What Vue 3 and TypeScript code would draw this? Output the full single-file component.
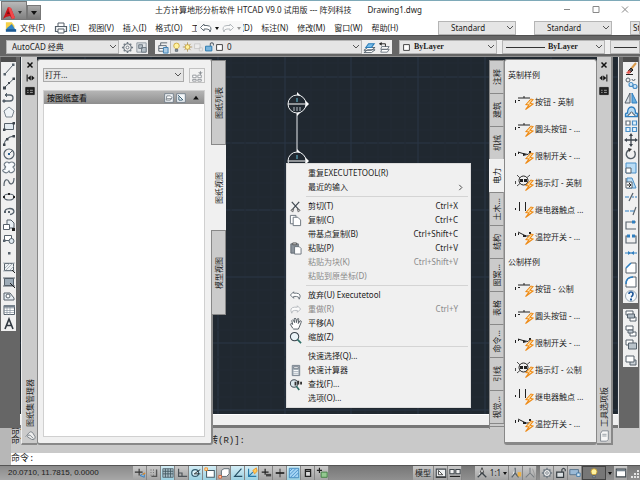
<script setup lang="ts">
import { h, ref, type FunctionalComponent } from 'vue'

type Shape = [d: string, stroke: string, fill: string, width?: number]

const S = '#56616b'
const L = '#4a90c8'
const K = '#222222'
const O = '#f08c1e'
const N = 'none'

const bolt: Shape = ['M17 6l-5 5.500 3 .5-3.500 4.500 7.500-5.500-3-.8 3-3.700z', '#ee8a16', '#ffe9b8', 1.1]

const icons: Record<string, Shape[]> = {
  line: [['M3 12L11 3', S, N], ['M1.5 11h2.5v2.5H1.5zM10 1.500h2.500v2.500H10z', N, S]],
  xline: [['M2.500 11.500L12 2.500', S, N], ['M1 10.500h3v3H1zM6 6h2v2H6zM10.500 1.500h2.500v2.500h-2.500z', N, '#3c444c']],
  pline: [['M2 11h6a3 3 0 0 0 0-6H4', S, N, 1.3], ['M5 3L3 5l2 2M1 10h2v2H1z', S, S]],
  polygon: [['M7 2l5 4-2 6H4L2 6z', '#7a858f', '#eef3f7']],
  rect: [['M2.500 4.500h9v6h-9z', S, '#e3ebf1'], ['M1 9.500h2.500V12H1zM10.500 3H13v2.500h-2.500z', N, '#3c444c']],
  arc: [['M2 12Q3 4 12 3', S, N, 1.2], ['M1 10.500h2.500V13H1zM4 5h2.500v2.500H4zM10.500 2H13v2.500h-2.500z', N, '#3c444c']],
  circle: [['M2 7a5 5 0 1 0 10 0a5 5 0 1 0-10 0', S, N, 1.2], ['M7 7l3-3', S, N], ['M6 6h2v2H6z', N, '#2c5f8c']],
  cloud: [['M4 6q-3-2-1-4t4 0q3-2 5 0t-1 4q3 3 0 5t-4-1q-2 3-5 1t1-3q-1-1 1-2', '#6f7b86', '#f8fbfd', 1.1]],
  spline: [['M2 11C2 3 6 4 7 7S12 10 12 3', S, N, 1.2]],
  ellipse: [['M2 7a5 3 0 1 0 10 0a5 3 0 1 0-10 0', S, N, 1.2], ['M6 3h2v2H6zM1 6h2v2H1zM11 6h2v2h-2z', N, K]],
  earc: [['M3 8a4.500 3 0 1 1 5 2.500', S, N, 1.3], ['M6 7h2v2H6zM2 7h2v2H2z', N, S]],
  insert: [['M5 2h4l3 3v5H5z', S, '#e9f0f5'], ['M1.500 6.500h6v5h-6z', S, '#fff'], ['M10 10h3v3h-3z', N, K]],
  block: [['M2.500 3.500h7v5h-7z', S, '#fff'], ['M7 9a2.500 2.500 0 1 0 5 0a2.500 2.500 0 1 0-5 0', S, '#dfe8ef'], ['M1 7.500h2.500V10H1z', N, S]],
  point: [['M6 6h2.500v2.500H6z', N, S]],
  hatch: [['M2.500 3.500h9v7h-9z', S, '#edf1f4'], ['M3 8l5-5M4 10l7-7M8 10l4-4M1 3h12M1 11h12', '#929da6', N, 0.7], ['M10 10l3 3', K, N]],
  gradient: [['M2.500 3.500h9v7h-9z', S, '#9dabb7'], ['M1 3h12M1 11h12', S, N], ['M8 8l5 5', K, N]],
  region: [['M2 4h6l4 5v2H2z', S, '#e7eef4'], ['M4 7a2 2 0 1 0 4 0a2 2 0 1 0-4 0', S, '#fff']],
  table: [['M2 2.500h10.500v9H2z', S, '#fff'], ['M2 5h10M2 7.500h10M2 9.500h10M5 3v9M8 3v9', '#8995a0', N, 0.7], ['M2 2h11v2.500H2z', N, '#75818c']],
  text: [['M3 12L7 2l4 10M4.500 8.500h5', '#303840', N, 1.6]],
  erase: [['M12 1L7 7', '#d99a4b', N, 2], ['M7 6l2 2-3 3-2-2z', K, '#555'], ['M5 8l2 2-2 2-3-1z', N, '#e4574e'], ['M2 12.500h7', K, N]],
  copy: [['M2 4a2 2 0 1 0 4 0a2 2 0 1 0-4 0M8 3a1.500 1.500 0 1 0 3 0', S, N], ['M5 8.500a2 2 0 1 0 4 0a2 2 0 1 0-4 0M9 10.500a2 2 0 1 0 4 0a2 2 0 1 0-4 0', L, '#cfe6f8', 1.2]],
  mirror: [['M6 2v10H1z', S, '#d9e0e6'], ['M8 2v10h5z', '#2f7fc0', '#69aede']],
  offset: [['M1.500 11.500V9q0-1 2-1 0-6 4-6t4 6q2 0 2 1v2.500z', '#2f7fc0', '#b7daf3', 1.3], ['M4 11q0-2 2-2 0-2 1.500-2T9 9q2 0 2 2', S, '#f0f0f0']],
  array: [['M2 2h4v4H2z', '#64707b', '#fff', 1.2], ['M8.500 2h4v4h-4zM2 8.500h4v4H2zM8.500 8.500h4v4h-4z', L, '#e7f3fc', 1.2]],
  move: [['M7 2v10M2 7h10', '#3c444c', N, 1.3], ['M7 0l2 3H5zM7 14l2-3H5zM0 7l3-2v4zM14 7l-3-2v4z', N, '#3c444c']],
  rotate: [['M5 3a4.500 4.500 0 1 0 5 1', '#555e66', N, 1.4], ['M4 1l4 1-3 3z', N, '#333']],
  scale: [['M2 2h10v10H2z', L, '#b9dcf5'], ['M2 7h5v5H2z', S, '#fff']],
  stretch: [['M3 2h5l4 10H3z', L, '#b9dcf5'], ['M2 2v10h6V6H2', S, '#fff'], ['M3 9h4M5 7l2 2-2 2', K, N]],
  trim: [['M5 11l4-8', S, N, 1.2], ['M1 7h4M8 7h2M11 7h2', '#2f7fc0', N, 1.2]],
  extend: [['M9 11l3-8', S, N, 1.2], ['M1 7h4M6 7h4', '#2f7fc0', N, 1.2]],
  breakpt: [['M12 4H2v7h10', S, N, 1.1], ['M8 2.500h3v3H8z', N, '#2f7fc0']],
  breakln: [['M4 4H2v7h10V4h-2', S, N, 1.1], ['M3 2.500h3v3H3zM8 2.500h3v3H8z', N, '#2f7fc0']],
  join: [['M1 7h12', '#2f7fc0', N], ['M4 5l3 2-3 2zM10 5L7 7l3 2z', N, '#2f7fc0']],
  chamfer: [['M2 12V7l5-5h5v10z', S, '#fff'], ['M2 7l5-5', '#2f7fc0', N, 1.6]],
  fillet: [['M2 12V9q0-7 7-7h3v10z', S, '#fff'], ['M2 9q0-7 7-7', '#2f7fc0', N, 1.6]],
  help: [['M1.500 7a5.500 5.500 0 1 0 11 0a5.500 5.500 0 1 0-11 0', '#9aa9b5', '#f4f8fb'], ['M5 5q0-2 2-2t2 2-2 3', '#1e5799', N, 1.7], ['M6 9.500h2v2H6z', N, '#1e5799']],
  order1: [['M2 2h7v4H2zM6 8h6v4H6z', S, '#fff'], ['M3.500 5h7v4h-7z', S, '#aeb9c2']],
  order2: [['M6 8h6v4H6zM2 2h7v4H2z', S, '#fff'], ['M4 6h5v3H4z', S, '#c3ccd4']],
  order3: [['M2 2h7v5H2z', S, '#fff'], ['M4.500 5h8v6h-8z', S, '#bac3ca']],
  order4: [['M6 7h6v5H6z', S, '#c9d0d6'], ['M2 3h8v6H2z', S, '#fff']],
  gear: [['M7 1v12M1 7h12M3 3l8 8M11 3l-8 8', '#6f7982', N, 1.6], ['M3 7a4 4 0 1 0 8 0a4 4 0 1 0-8 0', '#6f7982', '#eee', 1.2], ['M5.500 7a1.500 1.500 0 1 0 3 0a1.500 1.500 0 1 0-3 0', '#6f7982', '#fff']],
  wsave: [['M2 2h10v10H2z', '#8b959d', '#dfe3e6'], ['M4 4h4v4H4zM7 7h5v5H7z', '#6c7780', '#b5bfc7']],
  layers: [['M5 2h7M5 2v3M3 5h8v6H3zM3 8h8', S, '#f6f8fa'], ['M8 7h5v6H8z', '#397db2', '#a9cbe5']],
  bulb: [['M3.500 5.500a3.500 3.500 0 1 1 7 0q0 2-2 3.500h-3q-2-1.500-2-3.500z', '#c69b2d', '#fff3a0'], ['M5.500 10h3v2.500h-3z', S, '#8c98a3']],
  sun: [['M7 1v12M1 7h12M3 3l8 8M11 3l-8 8', '#a88e55', N], ['M4 7a3 3 0 1 0 6 0a3 3 0 1 0-6 0', '#c69b2d', '#fff3a0']],
  vpfreeze: [['M2 3h7v6H2zM8 8h4v4H8z', '#c3c3c3', '#ececec']],
  lock: [['M8 6V3q2-3 4 0v2', '#56616b', N, 1.3], ['M2 6h8v6H2z', '#2677ad', '#7ab5dd', 1.2]],
  box: [['M2.500 2.500h9v9h-9z', '#333', '#fff', 1.4]],
  stack: [['M1 10l4-3h8l-4 3zM1 12.500l4-3h8l-4 3z', '#53606b', '#fff'], ['M3 7l3-4h6l-3 4z', '#2b7db8', '#78bce9', 1.2]],
  stackback: [['M4 6h8l-2 3H3zM4 9h8l-2 3H3z', '#68737c', '#fff'], ['M2 3h6v3', K, N], ['M4 1v4L1 3z', N, K]],
  print: [['M4 5V2h6v3', S, '#fff'], ['M1.500 5.500h11v5h-11z', S, '#f5f7f8', 1.2], ['M4 8h6v4H4z', S, '#fff']],
  undo: [['M5 3L1.500 6.500 5 10V8h3q3 0 3 3 3-6-3-6.500H5z', '#626c75', '#fff']],
  redo: [['M9 3l3.500 3.500L9 10V8H6q-3 0-3 3-3-6 3-6.500h3z', '#b4b9bd', '#fafafa']],
  cut: [['M3 2l8 9M11 2L3 11', '#414a52', N, 1.3], ['M2 11l3-1-1 3zM12 11l-3-1 1 3z', '#666', '#ddd']],
  copydoc: [['M1.500 1.500h6v9h-6z', '#68717a', '#fff'], ['M4.500 3.500h5l3 3v6h-8z', '#68717a', '#fff']],
  paste: [['M2 2h8v10H2z', '#606870', '#8b939b'], ['M4 1h4v2H4z', '#555', '#ddd'], ['M6 5h5l2 2v6H6z', '#68717a', '#fff']],
  pan: [['M4 12L1.500 8q0-2 2.500 0L3 4q1-2 2 0l1 2-.5-4q1-1.500 2 0L8 6l1-4q2-1 1.500 1L10 7l2-3q2 0 1 2l-2 5-1 2H5z', '#4f575e', '#fff']],
  zoom: [['M1.500 6a4.500 4.500 0 1 0 9 0a4.500 4.500 0 1 0-9 0', '#39424b', '#eaf3f7', 1.1], ['M9 9l4 4', '#2d6f68', N, 1.8]],
  calc: [['M3.500 1.500h8v11h-8z', '#78828c', '#aab4bd'], ['M5 3h5v2H5z', '#77818a', '#fff'], ['M5 7h5M5 9h5M5 11h5', '#fff', N]],
  find: [['M1.500 6a4 4 0 1 0 8 0a4 4 0 1 0-8 0', '#414b54', '#dbe9ef', 1.1], ['M8 9l3 4', '#2d6f68', N, 1.8], ['M6 4h2v4H6zM9 3h2v4H9zM12 4h2v3h-2z', N, '#333']],
  close: [['M3.500 3.500l7 7M10.500 3.500l-7 7', '#111', N, 2]],
  dockL: [['M3 2v10', '#111', N, 1.5], ['M4 7l4-3v6zM13 7L9.500 4v6z', '#111', '#111', 0.5]],
  dockR: [['M11 2v10', '#111', N, 1.5], ['M10 7L6 4v6zM1 7l3.500-3v6z', '#111', '#111', 0.5]],
  props: [['M1 2h12v10H1z', '#111', '#222', 1], ['M3 6h2M3 9h2M7 6h4M7 9h4', '#ccc', N]],
  newsheet: [['M2 6h4v3H2zM8 6h4v3H8zM2 11h4v2H2zM8 11h4v2H8z', '#8a8f94', '#fff'], ['M11 1l1 2 2 0-2 1-1 2-1-2-2-1 2 0z', N, '#8a8f94']],
  sheetA: [['M1 1h12v12H1z', '#5d6d7b', '#f4f7f9'], ['M4 4h5l2 2-2 4H3z', S, '#fff'], ['M4 8h7', S, N]],
  sheetB: [['M1 1h12v12H1z', '#5d6d7b', '#f4f7f9'], ['M3 3l7 7M4 5v5h5', '#31586f', N, 1.3]],
  collapse: [['M3 9h8L7 4z', N, '#111']],
  clip: [['M2 8l4-5q2-2 4 0l3 5q0 4-4 3L4 8q0-3 3-2l4 4', '#707880', '#eee']],
  paper: [['M5 1h7v10l-2 2H3V4z', '#78818a', '#f7f7f7'], ['M5 5h5M5 7h5', '#8b949b', N]],
  snapi: [['M1 6h9M6 2v8', '#333', N, 1.3], ['M7 10l5-3v5z', '#3779b8', '#87b9e1'], ['M10 9l3-2', O, N, 1.4]],
  snap: [['M10 3v8H4', '#555', N, 1.6], ['M3 3h1v1H3zM6 3h1v1H6zM3 6h1v1H3zM6 6h1v1H6zM3 9h1v1H3zM6 9h1v1H6z', N, '#555']],
  grid: [['M1 2h12v10H1z', '#52636c', '#aac0ca'], ['M4 2v10M7 2v10M10 2v10M1 5h12M1 8h12', '#405660', N]],
  ortho: [['M3 2v9h10M3 7h4v4', '#4d5358', N, 1.4]],
  polar: [['M2 7a4 4 0 1 0 8 0a4 4 0 1 0-8 0', '#345d70', '#d9f1f9', 1.4], ['M5 8l7-5M5 8h7', '#222', N]],
  osnap: [['M3 4h9v8H3z', '#465c67', '#fff', 1.2], ['M1 1h3v3H1z', O, '#ffe1c2']],
  osnap3: [['M4 4l3-2h6v6l-3 3H4z', '#52616a', '#fff'], ['M1 10h3v3H1z', '#d5582e', '#ffe1c2']],
  track: [['M11 2L3 11h9', '#244e63', N, 1.3]],
  ducs: [['M3 2v9h9M3 11l5-5', '#277aa8', N, 1.3], ['M8 4l4-3 1 4-3 3z', O, '#ffcf56']],
  dyn: [['M2 6h8M6 2v7', '#222', N, 1.4], ['M7 8h6v3H7z', N, '#444']],
  lwt: [['M2 7h10', '#222', N, 2], ['M7 2v10', '#222', N]],
  transp: [['M1.500 1.500h11v11h-11z', '#3b82b7', '#a5d5f5'], ['M2 5l3-3M2 9l7-7M3 12l9-9M7 12l5-5', '#438bc6', N]],
  qp: [['M4 3h6v8H4zM4 5h6', '#222', '#ddd', 1.5]],
  sc: [['M1 4h6M4 1v6', '#222', N, 1.3], ['M6 6h7v6H6z', '#3c7b3d', '#93c990']],
  layout: [['M1.500 2.500h11v9h-11z', '#454b50', '#eef0f1', 1.3], ['M4 4l5 5H4z', '#333', '#fff'], ['M1 12h12', '#222', N]],
  qview: [['M1 3h5v5H1zM8 3h5v5H8z', '#3f464b', '#f1f1f1', 1.2], ['M1 11h12', '#222', N, 1.3]],
  annot: [['M7 1v6L2 12M7 7l5 5M5 7h4', '#3b4248', '#fff', 1.5], ['M7 1l2 5H5z', '#444', '#fff']],
  annot2: [['M6 1v6L2 12M6 7l4 5', '#59636b', '#fff', 1.5], ['M9 6h4v5H9z', N, '#edb145']],
  annot3: [['M7 1v6L2 12M7 7l5 5', '#777d82', N, 1.2], ['M10 2l3 9', '#999', N]],
  unlock: [['M8 6V3q2-3 4 0v2', '#454c52', N, 1.4], ['M2 6h8v6H2z', '#353c41', '#dbe0e3', 1.4]],
  hw: [['M1 3h10v6H1z', '#506c87', '#9bbad6'], ['M9 7h4v4H9z', '#3b76a8', '#d7ebf8']],
  clean: [['M1.500 2.500h11v9h-11z', '#3d454b', '#fff', 1.3], ['M2 3h10v2H2z', N, '#76848f']],
}

const symbols: Record<string, Shape[]> = {
  button: [['M1.500 7v3M4 5h12M10 3v2', K, N, 1], ['M4 7h2v1H4zM15 7h2v1h-2z', N, K], bolt],
  limit: [['M1.500 6v3M4 5l5 1.500 5 1 2-2', K, N, 1], ['M4 5h1v2H4zM9 6l4 2-4 1zM15 4h2v2h-2z', N, K], bolt],
  lamp: [['M3 1l12 12M16 1L3 12M1.500 7v3', K, N, 0.8], ['M5 6.500a4 4 0 1 0 9 0a4 4 0 1 0-9 0', K, '#f0f0f0', 1], ['M6 5h3v3H6zM10 5h3v3h-3z', N, K], bolt],
  relay: [['M5.500 1v9M11.500 1v9', K, N, 1], ['M1 7h1v2H1z', N, K], bolt],
  temp: [['M1.500 5v3M4 4l8 4h5', K, N, 1], ['M4 5h1v2H4zM9 7h3v2H9zM15 4h2v2h-2z', N, K], bolt],
}

const draw = (shapes: Shape[]) =>
  shapes.map(([d, stroke, fill, w]) => h('path', { d, stroke, fill, 'stroke-width': w ?? 1 }))

const Ico: FunctionalComponent<{ name: string }> = (p) =>
  h('svg', { viewBox: '0 0 14 14', 'aria-hidden': 'true' }, draw(icons[p.name] ?? []))
Ico.props = ['name']

const Sym: FunctionalComponent<{ name: string }> = (p) =>
  h('svg', { viewBox: '0 0 20 17', 'aria-hidden': 'true' }, draw(symbols[p.name] ?? []))
Sym.props = ['name']

const menus = ['文件(F)', '编辑(E)', '视图(V)', '插入(I)', '格式(O)', '工具(T)', '绘图(D)', '标注(N)', '修改(M)', '窗口(W)', '帮助(H)']
const drawTools = ['line', 'xline', 'pline', 'polygon', 'rect', 'arc', 'circle', 'cloud', 'spline', 'ellipse', 'earc', 'insert', 'block', 'point', 'hatch', 'gradient', 'region', 'table', 'text']
const editTools = ['erase', 'copy', 'mirror', 'offset', 'array', 'move', 'rotate', 'scale', 'stretch', 'trim', 'extend', 'breakpt', 'breakln', 'join', 'chamfer', 'fillet', 'help']
const orderTools = ['order1', 'order2', 'order3', 'order4']

const sheetTabs = ['图纸列表', '图纸视图', '模型视图']
const sheetTab = ref('图纸视图')
const toolTabs = ['注释', '建筑', '机械', '电力', '土木...', '结构', '图案...', '表格', '命令...', '引线', '视觉...']
const toolTab = ref('电力')

const groups = ['英制', '公制'].map((unit) => ({
  title: unit + '样例',
  items: [
    ['button', '按钮 - ' + unit],
    ['button', '圆头按钮 - ...'],
    ['limit', '限制开关 - ...'],
    ['lamp', '指示灯 - ' + unit],
    ['relay', '继电器触点 ...'],
    ['temp', '温控开关 - ...'],
  ],
}))

interface Cmd { label: string; key?: string; icon?: string; off?: boolean; sub?: boolean }
const commands: Cmd[][] = [
  [{ label: '重复EXECUTETOOL(R)' }, { label: '最近的输入', sub: true }],
  [
    { label: '剪切(T)', key: 'Ctrl+X', icon: 'cut' },
    { label: '复制(C)', key: 'Ctrl+C', icon: 'copydoc' },
    { label: '带基点复制(B)', key: 'Ctrl+Shift+C' },
    { label: '粘贴(P)', key: 'Ctrl+V', icon: 'paste' },
    { label: '粘贴为块(K)', key: 'Ctrl+Shift+V', off: true },
    { label: '粘贴到原坐标(D)', off: true },
  ],
  [
    { label: '放弃(U) Executetool', icon: 'undo' },
    { label: '重做(R)', key: 'Ctrl+Y', icon: 'redo', off: true },
    { label: '平移(A)', icon: 'pan' },
    { label: '缩放(Z)', icon: 'zoom' },
  ],
  [
    { label: '快速选择(Q)...' },
    { label: '快速计算器', icon: 'calc' },
    { label: '查找(F)...', icon: 'find' },
    { label: '选项(O)...' },
  ],
]

const toggles = ref([
  ['snapi', false], ['snap', false], ['grid', true], ['ortho', false], ['polar', true], ['osnap', true], ['osnap3', false],
  ['track', true], ['ducs', true], ['dyn', false], ['lwt', false], ['transp', true], ['qp', false], ['sc', false],
] as [string, boolean][])

const gridLines = Array.from({ length: 150 }, (_, i) => ({ at: Math.round((i * 40) / 3), major: i % 5 === 0 }))
</script>

<template>
  <div class="app">
    <header class="top">
      <button class="logo" aria-label="应用程序菜单">
        <svg class="logo-mark" viewBox="0 0 14 14"><path d="M1 13L6 1l3 1 4 10-3 1-2-3-4 1z" fill="#c9151b" /><path d="M6 1l3 1 4 10-3 1z" fill="#f1484b" /><path d="M6 5l2 3H5z" fill="#7c0e11" /></svg>
        <span class="tri"></span>
      </button>
      <button class="quick" aria-label="快速访问"><span class="tri"></span></button>
      <div class="titles"><span>土方计算地形分析软件 HTCAD V9.0 试用版 --- 阵列科技</span><span>Drawing1.dwg</span></div>
      <div class="window-buttons">
        <button aria-label="最小化"><svg viewBox="0 0 8 8"><path d="M1 4h6" /></svg></button>
        <button aria-label="最大化"><svg viewBox="0 0 8 8"><path d="M1 1h6v6H1z" /></svg></button>
        <button aria-label="关闭"><svg viewBox="0 0 8 8"><path d="M1 1l6 6M7 1L1 7" /></svg></button>
      </div>
    </header>

    <nav class="menubar">
      <svg class="doc" viewBox="0 0 14 14"><path d="M1 1h7l3 4v5H1z" fill="#f5d14a" /><path d="M2 8l6-5 5 8H2z" fill="#3384c4" /><path d="M1 9h12v3H1z" fill="#1d5b95" /></svg>
      <button v-for="m in menus" :key="m" class="menu">{{ m }}</button>
      <button class="float-print" aria-label="打印"><Ico name="print" /></button>
      <div class="float-undo">
        <button aria-label="放弃"><Ico name="undo" /></button><span class="tri small"></span>
        <button aria-label="重做"><Ico name="redo" /></button><span class="tri small pale"></span>
      </div>
      <div class="styles">
        <label v-for="n in 2" :key="n" class="combo wide">
          <select aria-label="样式"><option>Standard</option></select>
          <svg class="chev" viewBox="0 0 8 8"><path d="M1 2l3 3 3-3" /></svg>
        </label>
        <label class="combo cut-off"><select aria-label="多重引线样式"><option>Standard</option></select></label>
      </div>
    </nav>

    <div class="toolbar">
      <section class="group workspace-group">
        <label class="combo grow">
          <select aria-label="工作空间"><option>AutoCAD 经典</option></select>
          <svg class="chev" viewBox="0 0 8 8"><path d="M1 2l3 3 3-3" /></svg>
        </label>
        <button aria-label="工作空间设置"><Ico name="gear" /></button>
        <button aria-label="我的工作空间"><Ico name="wsave" /></button>
      </section>
      <section class="group layer-group">
        <button aria-label="图层特性"><Ico name="layers" /></button>
        <label class="combo grow layer">
          <Ico name="bulb" /><Ico name="sun" /><Ico name="vpfreeze" /><Ico name="lock" /><Ico name="box" class="swatch" />
          <select aria-label="图层"><option>0</option></select>
          <svg class="chev" viewBox="0 0 8 8"><path d="M1 2l3 3 3-3" /></svg>
        </label>
        <button aria-label="置为当前"><Ico name="stack" /></button>
        <button aria-label="上一个图层"><Ico name="stackback" /></button>
      </section>
      <section class="group prop-group">
        <label class="combo serif color">
          <Ico name="box" class="swatch" />
          <select aria-label="颜色"><option>ByLayer</option></select>
          <svg class="chev" viewBox="0 0 8 8"><path d="M1 2l3 3 3-3" /></svg>
        </label>
        <label class="combo serif ltype">
          <span class="rule"></span>
          <select aria-label="线型"><option>ByLayer</option></select>
          <svg class="chev" viewBox="0 0 8 8"><path d="M1 2l3 3 3-3" /></svg>
        </label>
        <label class="combo serif grow">
          <span class="rule short"></span>
          <select aria-label="线宽"><option>ByLayer</option></select>
        </label>
      </section>
    </div>

    <main class="workspace">
      <aside class="side left">
        <div class="tools drawing"><i class="grip"></i><button v-for="t in drawTools" :key="t" :aria-label="t"><Ico :name="t" /></button></div>
      </aside>

      <div class="view">
        <svg class="canvas">
          <g v-for="g in gridLines" :key="g.at" :stroke="g.major ? '#2b3646' : '#222b34'">
            <line :x1="g.at - 2" :x2="g.at - 2" y1="0" y2="2000" /><line :y1="g.at - 47" :y2="g.at - 47" x1="0" x2="2000" />
          </g>
          <path d="M277 55v42" stroke="#e8ebee" />
          <g v-for="y in [47, 104]" :key="y" :transform="`translate(277 ${y})`">
            <path d="M0-12L12 0 0 12z" fill="#fff" />
            <circle r="9" fill="#202830" stroke="#eceff1" />
            <path d="M-9 0H9" stroke="#fff" />
            <path d="M0-6v4" stroke="#68c0d8" />
            <path d="M-3 3v4M0 3v4M3 3v4" stroke="#b7c0c8" />
          </g>
        </svg>
        <div class="hscroll"></div>
      </div>

      <aside class="side right">
        <div class="tools editing"><i class="grip"></i><button v-for="t in editTools" :key="t" :aria-label="t"><Ico :name="t" /></button></div>
        <div class="tools ordering"><button v-for="t in orderTools" :key="t" :aria-label="t"><Ico :name="t" /></button></div>
      </aside>

      <section class="palette sheets">
        <div class="spine">
          <button aria-label="关闭"><Ico name="close" /></button>
          <button aria-label="自动隐藏"><Ico name="dockL" /></button>
          <button aria-label="特性"><Ico name="props" /></button>
          <span class="sideways spine-title">图纸集管理器</span>
          <Ico name="clip" />
        </div>
        <div class="sheet-body">
          <div class="open-row">
            <label class="combo grow">
              <select aria-label="图纸集"><option>打开...</option></select>
              <svg class="chev" viewBox="0 0 8 8"><path d="M1 2l3 3 3-3" /></svg>
            </label>
            <button class="new" aria-label="新建视图类别"><Ico name="newsheet" /></button>
          </div>
          <div class="list">
            <div class="list-head">
              <b>按图纸查看</b>
              <button aria-label="按类别查看"><Ico name="sheetA" /></button>
              <button aria-label="按图纸查看"><Ico name="sheetB" /></button>
              <button aria-label="折叠" class="fold"><Ico name="collapse" /></button>
            </div>
          </div>
        </div>
        <div class="sheet-tabs">
          <button v-for="t in sheetTabs" :key="t" :class="{ on: t === sheetTab }" @click="sheetTab = t"><span class="sideways">{{ t }}</span></button>
        </div>
      </section>

      <section class="palette tool-palette">
        <div class="tool-tabs">
          <button v-for="t in toolTabs" :key="t" :class="{ on: t === toolTab }" @click="toolTab = t"><span class="sideways">{{ t }}</span></button>
          <i></i><i></i>
        </div>
        <div class="samples">
          <template v-for="g in groups" :key="g.title">
            <h2>{{ g.title }}</h2>
            <button v-for="[sym, label] in g.items" :key="label"><Sym :name="sym" />{{ label }}</button>
          </template>
        </div>
        <div class="spine">
          <button aria-label="关闭"><Ico name="close" /></button>
          <button aria-label="自动隐藏"><Ico name="dockR" /></button>
          <button aria-label="特性"><Ico name="props" /></button>
          <span class="sideways spine-title">工具选项板</span>
          <Ico name="paper" />
        </div>
      </section>

      <div class="context" role="menu">
        <ul v-for="(set, i) in commands" :key="i">
          <li v-for="c in set" :key="c.label">
            <button role="menuitem" :disabled="c.off">
              <Ico v-if="c.icon" :name="c.icon" /><i v-else></i>
              <span>{{ c.label }}</span>
              <kbd v-if="c.key">{{ c.key }}</kbd>
              <svg v-if="c.sub" class="arrow" viewBox="0 0 6 8"><path d="M1 1l3 3-3 3" fill="none" stroke="#333" /></svg>
            </button>
          </li>
        </ul>
      </div>
    </main>

    <section class="command">
      <div class="history">
        <p>命令:</p>
        <p>命令:指定插入点或 [基点(B)/比例(S)/X/Y/旋转(R)]:</p>
      </div>
      <label class="prompt">命令:<input type="text" aria-label="命令" /></label>
    </section>

    <footer class="status">
      <output>20.0710, 11.7815, 0.0000</output>
      <button v-for="t in toggles" :key="t[0]" :class="{ on: t[1] }" :aria-label="t[0]" @click="t[1] = !t[1]"><Ico :name="t[0]" /></button>
      <span class="fill"></span>
      <button class="model">模型</button>
      <button aria-label="布局"><Ico name="layout" /></button>
      <button aria-label="快速查看"><Ico name="qview" /></button>
      <span class="gap"></span>
      <button class="ratio"><Ico name="annot" />1:1<span class="tri small"></span></button>
      <button aria-label="注释可见性"><Ico name="annot2" /></button>
      <button aria-label="自动添加比例"><Ico name="annot3" /></button>
      <span class="sep"></span>
      <button aria-label="切换工作空间"><Ico name="gear" /></button>
      <button aria-label="锁定"><Ico name="unlock" /></button>
      <button aria-label="硬件加速"><Ico name="hw" /></button>
      <button class="isolate" aria-label="隔离对象"><Ico name="bulb" /></button>
      <span class="tri small"></span>
      <button aria-label="全屏显示"><Ico name="clean" /></button>
      <svg class="resize" viewBox="0 0 9 10"><path d="M6 2h2v2H6zM3 5h2v2H3zM6 5h2v2H6zM0 8h2v2H0zM3 8h2v2H3zM6 8h2v2H6z" fill="#e3e3e3" /></svg>
    </footer>
  </div>
</template>

<style>
body {
  overflow: hidden;
}
</style>

<style scoped>
.app {
  height: 100vh;
  display: flex;
  flex-direction: column;
  overflow: hidden;
  background: #666;
  color: #1c1c1c;
  font: 8px/12px 'Noto Sans', 'Noto Sans CJK SC', sans-serif;
}
.app * {
  box-sizing: border-box;
}
button,
select,
input {
  margin: 0;
  padding: 0;
  border: 0;
  border-radius: 0;
  background: none;
  color: inherit;
  font: inherit;
}
button {
  display: flex;
  align-items: center;
  justify-content: center;
  white-space: nowrap;
}
svg {
  display: block;
  flex: none;
  width: 12px;
  height: 12px;
}
.tri {
  border: 3px solid transparent;
  border-top: 4px solid #111;
  border-bottom: 0;
}
.tri.small {
  border-width: 3px 2px 0;
}
.tri.pale {
  border-top-color: #999;
}

.top {
  flex: none;
  height: 20px;
  display: flex;
  align-items: flex-start;
  background: #fff;
  border-top: 1px solid #7ea9b8;
}
.logo {
  width: 26px;
  height: 19px;
  margin-left: 1px;
  padding-top: 4px;
  gap: 2px;
  justify-content: flex-start;
  background: linear-gradient(#b9b9b9, #808080);
  border: 1px solid #777;
}
.logo .tri {
  border-width: 3px 2px 0;
  border-top-color: #333;
}
.logo-mark {
  width: 14px;
  height: 14px;
}
.quick {
  width: 14px;
  height: 15px;
  margin-top: 4px;
  background: linear-gradient(#a9a9a9, #777);
  border: 1px solid #777;
}
.titles {
  flex: 1;
  display: flex;
  gap: 16px;
  padding: 3px 0 0 114px;
  white-space: nowrap;
}
.window-buttons {
  display: flex;
  gap: 21px;
  padding: 4px 11px 0 0;
}
.window-buttons svg {
  width: 8px;
  height: 9px;
  fill: none;
  stroke: #888;
}

.menubar {
  position: relative;
  flex: none;
  height: 15px;
  display: flex;
  align-items: center;
  gap: 9px;
  padding-left: 5px;
  background: #fff;
}
.doc {
  width: 12px;
  height: 13px;
  margin-right: -6px;
}
.float-print {
  position: absolute;
  left: 53px;
  top: 1px;
  width: 16px;
  height: 14px;
  background: #fff;
}
.float-print svg {
  width: 14px;
  height: 14px;
}
.float-undo {
  position: absolute;
  left: 197px;
  top: 1px;
  height: 14px;
  display: flex;
  align-items: center;
  gap: 2px;
  padding: 0 2px;
  background: #f8f8f8;
}
.float-undo svg {
  width: 14px;
  height: 14px;
}
.styles {
  flex: 1;
  display: flex;
  justify-content: flex-end;
  gap: 18px;
  align-self: flex-end;
}
.combo {
  display: flex;
  align-items: center;
  min-width: 0;
  height: 14px;
  background: #e5e5e5;
  border: 1px solid #b5b5b5;
}
.combo select {
  flex: 1;
  min-width: 0;
  height: 12px;
  padding: 0 5px;
  appearance: none;
  outline: 0;
}
.combo.wide {
  width: 78px;
}
.combo.wide select {
  padding-left: 12px;
}
.combo.cut-off {
  width: 10px;
  overflow: hidden;
}
.combo.cut-off select {
  padding: 0 0 0 2px;
}
.combo.grow {
  flex: 1;
}
.chev {
  width: 8px;
  height: 8px;
  fill: none;
  stroke: #555;
  pointer-events: none;
  margin-right: 1px;
}

.toolbar {
  flex: none;
  height: 22px;
  display: flex;
  gap: 7px;
  padding: 4px 0 4px 6px;
  background: #666;
  border-top: 1px solid #505050;
  border-bottom: 1px solid #919191;
}
.group {
  display: flex;
  align-items: center;
  background: #eee;
  height: 14px;
}
.group button {
  width: 15px;
}
.group button svg {
  width: 13px;
  height: 13px;
}
.workspace-group {
  width: 142px;
}
.workspace-group .combo {
  margin-right: 1px;
}
.workspace-group button:last-child {
  width: 13px;
}
.layer-group {
  width: 237px;
}
.layer svg {
  width: 11px;
  height: 12px;
}
.layer select {
  padding-left: 3px;
}
.layer .chev {
  width: 8px;
  height: 8px;
}
.combo svg.swatch {
  width: 9px;
  height: 9px;
}
.prop-group {
  flex: 1;
  gap: 5px;
  overflow: hidden;
}
.serif {
  font: bold 8px/12px 'Liberation Serif', serif;
}
.serif select {
  padding: 0 3px;
}
.serif .swatch {
  margin-left: 2px;
}
.color {
  width: 98px;
}
.ltype {
  width: 103px;
}
.rule {
  width: 39px;
  height: 1px;
  margin-left: 3px;
  background: #333;
}
.rule.short {
  width: 23px;
  flex: none;
}

.workspace {
  position: relative;
  flex: 1;
  min-height: 0;
  display: flex;
}
.side {
  flex: none;
  background: #666;
}
.side.left {
  width: 20px;
  padding-left: 1px;
}
.side.right {
  width: 22px;
  padding: 0 2px 0 4px;
  border-left: 1px solid #ddd;
  border-right: 1px solid #bbb;
}
.tools {
  display: flex;
  flex-direction: column;
  justify-content: space-between;
  width: 15px;
  background: #f0f0f0;
}
.tools button {
  height: 14px;
}
.tools svg {
  width: 14px;
  height: 14px;
}
.grip {
  height: 5px;
  background: #4d4d4d;
}
.drawing {
  height: 274px;
}
.editing {
  height: 246px;
}
.ordering {
  height: 58px;
  margin-top: 6px;
}
.view {
  flex: 1;
  min-width: 0;
  display: flex;
  flex-direction: column;
  background: #202830;
}
.canvas {
  width: 100%;
  height: auto;
  flex: 1;
  min-height: 0;
  overflow: hidden;
}
.hscroll {
  height: 14px;
  background: #f0f0f0;
  border-top: 1px solid #fff;
  border-bottom: 3px solid #777;
}

.palette {
  position: absolute;
  top: 0;
  bottom: -17px;
  z-index: 2;
  display: flex;
}
.spine {
  flex: none;
  width: 16px;
  display: flex;
  flex-direction: column;
  align-items: center;
  padding: 1px 0 0;
  background: #cbcbcb;
}
.spine button {
  height: 13px;
}
.spine button svg {
  width: 10px;
  height: 10px;
}
.sideways {
  writing-mode: vertical-rl;
  text-orientation: sideways;
  transform: rotate(180deg);
  white-space: nowrap;
}
.spine-title {
  margin-top: auto;
  margin-bottom: 3px;
}
.sheets {
  left: 21px;
  width: 205px;
}
.sheets .spine {
  border-left: 1px solid #eee;
  border-bottom: 2px solid #888;
  padding-bottom: 1px;
}
.sheet-body {
  flex: 1;
  min-width: 0;
  display: flex;
  flex-direction: column;
  gap: 7px;
  padding: 8px 6px 6px 5px;
  margin-top: 2px;
  background: #f0f0f0;
  border: 1px solid #888;
  border-width: 1px 2px 2px 1px;
  border-radius: 3px;
}
.open-row {
  display: flex;
  gap: 5px;
}
.open-row .combo {
  border-color: #aaa;
}
.open-row .combo select {
  padding-left: 1px;
}
.new {
  width: 16px;
  height: 15px;
  background: #f2f2f2;
  border: 1px solid #c2c2c2;
}
.list {
  flex: 1;
  background: #fff;
  border: 1px solid #d0d0d0;
}
.list-head {
  display: flex;
  align-items: center;
  gap: 2px;
  height: 13px;
  padding: 0 3px;
  background: linear-gradient(#b5b5b5, #8e8e8e);
}
.list-head b {
  flex: 1;
  font-weight: 500;
}
.list-head svg {
  width: 10px;
  height: 10px;
}
.fold {
  margin-left: 3px;
}
.sheet-tabs {
  flex: none;
  width: 15px;
  margin: 3px 0 0 -2px;
  align-self: flex-start;
}
.sheet-tabs button {
  width: 15px;
  height: 85px;
  background: #cbcbcb;
  border: 1px solid #888;
}
.sheet-tabs .on,
.tool-tabs .on {
  background: #f0f0f0;
  border-color: #f0f0f0;
}
.tool-palette {
  right: 27px;
  width: 124px;
  color: #222;
}
.tool-tabs {
  flex: none;
  width: 15px;
  margin-top: 3px;
  align-self: flex-start;
  background: #cbcbcb;
}
.tool-tabs button {
  width: 15px;
  height: 33px;
  border: 1px solid #888;
  border-bottom-width: 0;
  border-right-color: #aaa;
  overflow: hidden;
}
.tool-tabs i {
  display: block;
  height: 3px;
  border: 1px solid #888;
  border-width: 1px 0 0 1px;
}
.samples {
  flex: 1;
  min-width: 0;
  margin-top: 2px;
  padding: 9px 3px 0 3px;
  background: #f0f0f0;
  border: 1px solid #888;
  border-width: 1px 1px 3px;
  border-radius: 3px;
  overflow: hidden;
}
.samples h2 {
  margin: 0 0 7px;
  font: inherit;
  line-height: 12px;
}
.samples h2:not(:first-child) {
  margin-top: 6px;
}
.samples button {
  height: 27px;
  gap: 1px;
  padding-left: 6px;
  width: 100%;
  justify-content: flex-start;
}
.samples svg {
  width: 20px;
  height: 17px;
}
.tool-palette .spine {
  border-right: 2px solid #888;
  border-bottom: 2px solid #888;
  padding-bottom: 1px;
}

.context {
  position: absolute;
  left: 286px;
  top: 106px;
  width: 185px;
  padding: 2px 0;
  z-index: 3;
  background: #f0f0f0;
  border: 1px solid #dcdcdc;
}
.context ul {
  margin: 0;
  padding: 0;
  list-style: none;
}
.context ul + ul::before {
  content: '';
  display: block;
  height: 1px;
  margin: 2px 2px 2px 19px;
  background: #d4d4d4;
}
.context li button {
  width: 100%;
  height: 14px;
  padding: 0 12px 0 2px;
  gap: 6px;
}
.context li svg:first-child {
  width: 13px;
  height: 13px;
}
.context i {
  width: 13px;
}
.context span {
  flex: 1;
  text-align: left;
}
.context kbd {
  font: inherit;
}
.context button:disabled {
  color: #8a8a8a;
}
svg.arrow {
  width: 6px;
  height: 7px;
  margin-right: -6px;
}

.command {
  flex: none;
  height: 37px;
  display: flex;
  flex-direction: column;
  border-left: 11px solid #b7b7b7;
  background: #c9c9c9;
  font: 9px/11px 'Liberation Mono', 'Noto Sans CJK SC', monospace;
}
.history {
  flex: 1;
  min-height: 0;
  overflow: hidden;
}
.history p {
  margin: 0;
  line-height: 9px;
  white-space: nowrap;
}
.prompt {
  display: flex;
  align-items: center;
  height: 12px;
  background: #fff;
}
.prompt input {
  flex: 1;
  min-width: 0;
  outline: 0;
}

.status {
  flex: none;
  height: 15px;
  display: flex;
  align-items: center;
  background: linear-gradient(#777, #909090);
  border-top: 1px solid #555;
}
.status output {
  width: 133px;
  height: 14px;
  padding-left: 8px;
  background: linear-gradient(#8b8b8b, #a7a7a7);
  font: 8px/14px 'Liberation Sans', sans-serif;
}
.status button {
  flex: none;
  width: 14px;
  height: 14px;
  background: linear-gradient(#c9c9c9, #a3a3a3);
  border-right: 1px solid #858585;
}
.status button.on {
  background: linear-gradient(#d4edf5, #9bd0e1);
}
.status .fill {
  flex: 1;
}
.status .model {
  width: 21px;
}
.status .gap {
  width: 13px;
}
.status .sep {
  width: 3px;
}
.status .ratio {
  width: 34px;
  gap: 2px;
}
.status .isolate {
  width: 24px;
  background: #777;
  border: 1px solid #444;
}
.status > .tri {
  margin: 0 2px;
}
.resize {
  width: 9px;
  height: 10px;
  margin-left: 3px;
}
</style>
